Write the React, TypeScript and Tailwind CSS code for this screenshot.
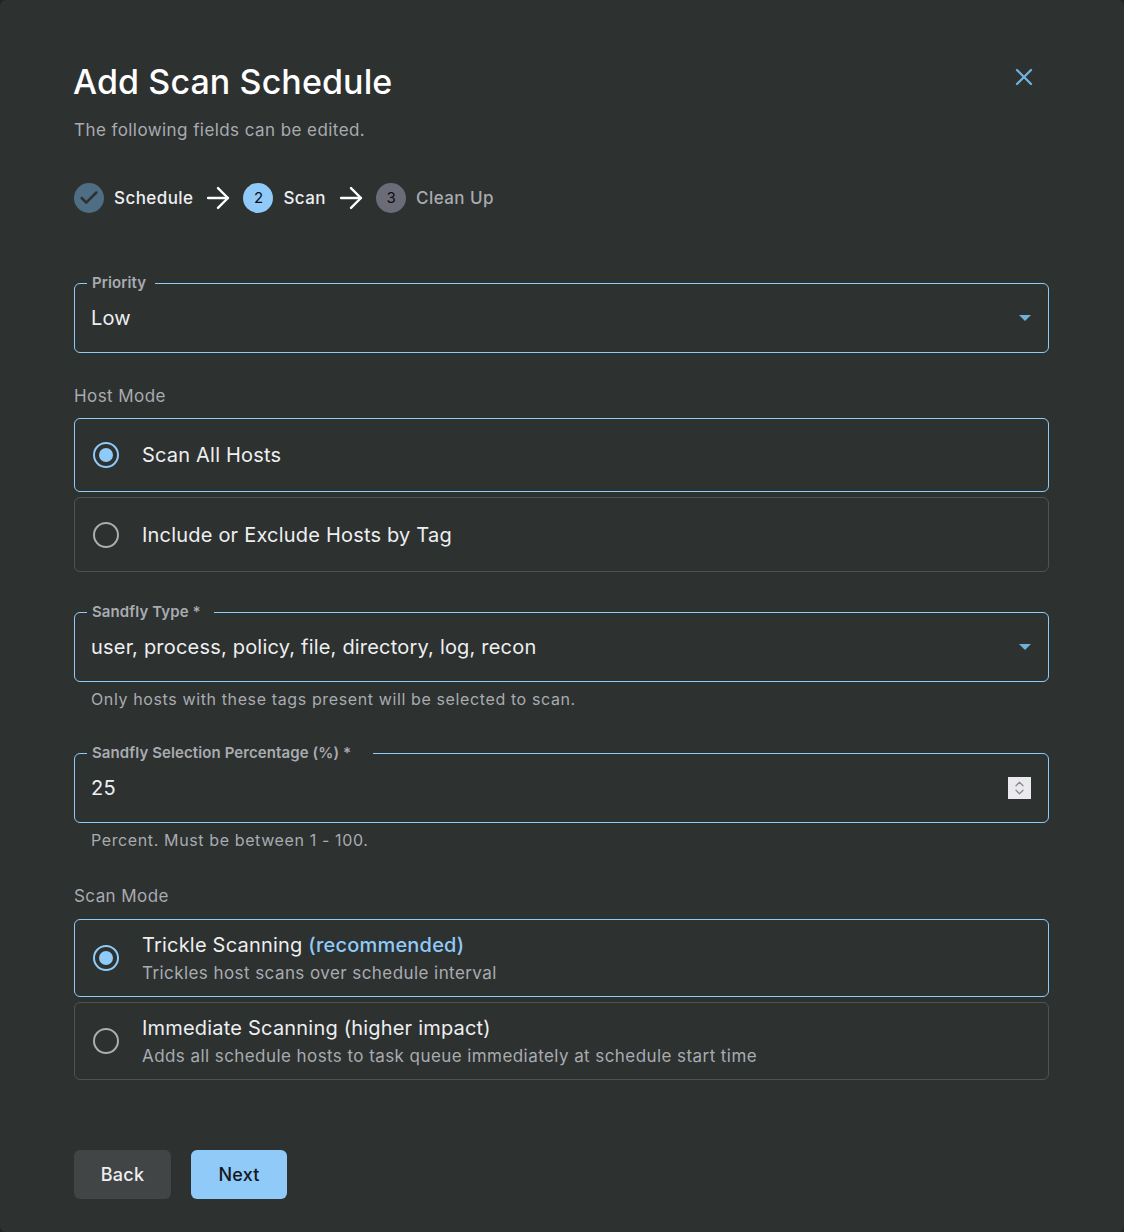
import { ArrowRight, Check, ChevronDown, ChevronUp, X } from "lucide-react";

type FieldProps = {
  label: string;
  value: string;
  notchClass: string;
  children?: React.ReactNode;
};

const Field = ({ label, value, notchClass, children }: FieldProps) => (
  <div className="relative flex h-[70px] items-center justify-between rounded-[6px] border border-[#90caf9] pl-4 pr-[15px]">
    <span
      className={`absolute top-[-11px] left-[12px] bg-[#2d3130] pl-[5px] text-[15px] leading-[20px] font-semibold tracking-[0.1px] text-[#a9abb0] ${notchClass}`}
    >
      {label}
    </span>
    <span className="text-[20px] leading-[28px] tracking-[0.2px] text-[#eeeff1]">
      {value}
    </span>
    {children}
  </div>
);

const SelectCaret = () => (
  <svg width="12" height="6" viewBox="0 0 12 6" className="mr-[2px]">
    <path d="M0 0h12L6 6z" fill="#6fb1dd" />
  </svg>
);

type RadioCardProps = {
  selected?: boolean;
  heightClass: string;
  children: React.ReactNode;
};

const RadioCard = ({ selected, heightClass, children }: RadioCardProps) => (
  <div
    className={`flex items-center rounded-[6px] border pl-[18px] ${heightClass} ${
      selected ? "border-[#90caf9]" : "border-[#505353]"
    }`}
  >
    <div
      className={`flex h-[26px] w-[26px] shrink-0 items-center justify-center rounded-full border-[2.5px] ${
        selected ? "border-[#90caf9]" : "border-[#abadb1]"
      }`}
    >
      {selected && <div className="h-[14px] w-[14px] rounded-full bg-[#90caf9]" />}
    </div>
    <div className="ml-[23px]">{children}</div>
  </div>
);

const cardTitle = "text-[20px] leading-[28px] tracking-[0.2px] text-[#eeeff1]";
const cardSub = "mt-[1px] text-[17px] leading-[26px] tracking-[0.43px] text-[#a9abb0]";
const helper = "mt-[6px] pl-[17px] text-[16px] leading-[22px] tracking-[0.62px] text-[#a9abb0]";
const sectionLabel = "text-[17px] leading-[26px] tracking-[0.43px] text-[#a9abb0]";

export default function App() {
  return (
    <div className="h-[1232px] w-[1124px] bg-[#232525] font-['Inter',sans-serif]">
      <div className="h-full rounded-[6px] bg-[#2d3130] pt-[58px] pr-[75px] pl-[74px]">
        <div className="relative">
          <h1 className="-ml-[1px] text-[34px] leading-[48px] font-medium tracking-[0.1px] text-white">
            Add Scan Schedule
          </h1>
          <button className="absolute top-[5px] right-[11px] text-[#6fb1dd]">
            <X size={28} strokeWidth={2} />
          </button>
        </div>
        <p className="mt-[11px] text-[17px] leading-[26px] tracking-[0.43px] text-[#a9abb0]">
          The following fields can be edited.
        </p>

        <div className="mt-[40px] flex h-[30px] items-center text-[17px] tracking-[0.43px]">
          <div className="flex h-[30px] w-[30px] items-center justify-center rounded-full bg-[#4f6e86]">
            <Check size={22} strokeWidth={2.8} className="text-[#2d3130]" />
          </div>
          <span className="ml-[10px] pt-[1px] font-medium text-[#eeeff1]">Schedule</span>
          <ArrowRight size={34} strokeWidth={1.7} className="ml-[8px] text-white" />
          <div className="ml-[8px] flex h-[30px] w-[30px] items-center justify-center rounded-full bg-[#90caf9] text-[15px] tracking-normal text-[#0c0f12]">
            2
          </div>
          <span className="ml-[10px] pt-[1px] font-medium text-[#eeeff1]">Scan</span>
          <ArrowRight size={34} strokeWidth={1.7} className="ml-[8px] text-white" />
          <div className="ml-[8px] flex h-[30px] w-[30px] items-center justify-center rounded-full bg-[#6b6c78] text-[15px] tracking-normal text-[#0c0f12]">
            3
          </div>
          <span className="ml-[10px] pt-[1px] font-medium text-[#a9abb0]">Clean Up</span>
        </div>

        <div className="mt-[70px]">
          <Field label="Priority" value="Low" notchClass="pr-[9px]">
            <SelectCaret />
          </Field>
        </div>

        <div className={`mt-[30px] ${sectionLabel}`}>Host Mode</div>
        <div className="mt-[9px] flex flex-col gap-[5px]">
          <RadioCard selected heightClass="h-[74px]">
            <div className={cardTitle}>Scan All Hosts</div>
          </RadioCard>
          <RadioCard heightClass="h-[75px]">
            <div className={cardTitle}>Include or Exclude Hosts by Tag</div>
          </RadioCard>
        </div>

        <div className="mt-[40px]">
          <Field
            label="Sandfly Type *"
            value="user, process, policy, file, directory, log, recon"
            notchClass="pr-[13px]"
          >
            <SelectCaret />
          </Field>
          <div className={helper}>Only hosts with these tags present will be selected to scan.</div>
        </div>

        <div className="mt-[43px]">
          <Field
            label="Sandfly Selection Percentage (%) *"
            value="25"
            notchClass="pr-[22px]"
          >
            <div className="mr-[2px] flex h-[22px] w-[23px] flex-col items-center justify-center bg-[#e9e9ee] text-[#8a8a94]">
              <ChevronUp size={17} strokeWidth={2.2} className="-mb-[3px]" />
              <ChevronDown size={17} strokeWidth={2.2} className="-mt-[3px]" />
            </div>
          </Field>
          <div className={helper}>Percent. Must be between 1 - 100.</div>
        </div>

        <div className={`mt-[32px] ${sectionLabel}`}>Scan Mode</div>
        <div className="mt-[10px] flex flex-col gap-[5px]">
          <RadioCard selected heightClass="h-[78px]">
            <div className={cardTitle}>
              Trickle Scanning{" "}
              <span className="font-medium text-[#90caf9]">(recommended)</span>
            </div>
            <div className={cardSub}>Trickles host scans over schedule interval</div>
          </RadioCard>
          <RadioCard heightClass="h-[78px]">
            <div className={cardTitle}>Immediate Scanning (higher impact)</div>
            <div className={cardSub}>
              Adds all schedule hosts to task queue immediately at schedule start time
            </div>
          </RadioCard>
        </div>

        <div className="mt-[70px] flex gap-[20px]">
          <button className="h-[49px] w-[97px] rounded-[6px] bg-[#424545] text-[18px] font-medium tracking-[0.2px] text-[#eeeff1]">
            Back
          </button>
          <button className="h-[49px] w-[96px] rounded-[6px] bg-[#90caf9] text-[18px] font-medium tracking-[0.2px] text-[#14181c]">
            Next
          </button>
        </div>
      </div>
    </div>
  );
}
